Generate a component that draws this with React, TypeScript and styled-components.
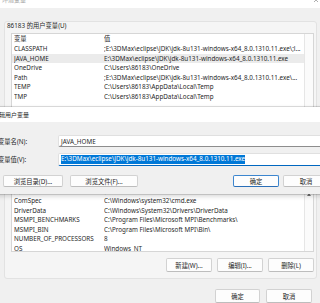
import React from "react";
import styled, { createGlobalStyle } from "styled-components";

const FONT = `"Segoe UI", "Noto Sans", "Noto Sans CJK SC", sans-serif`;

const Global = createGlobalStyle`
  *, *::before, *::after { box-sizing: border-box; }
  html, body { margin: 0; padding: 0; background: #f0f0f0; }
  body { width: 320px; height: 303px; overflow: hidden; }
`;

const Screen = styled.div`
  position: relative;
  width: 320px;
  height: 303px;
  overflow: hidden;
  background: #f0f0f0;
  font-family: ${FONT};
  font-size: 6.3px;
  color: #1f1f1f;
  display: flex;
  flex-direction: column;
`;

const TitleBar = styled.div`
  height: 8px;
  flex: none;
  background: #fff;
  display: flex;
  justify-content: space-between;
  align-items: flex-start;
  padding: 0 1px 0 2px;
  overflow: hidden;
`;

const TitleText = styled.span`
  font-size: 6px;
  line-height: 6px;
  color: #9a9a9a;
  margin-top: -3px;
  white-space: nowrap;
`;

const CloseGlyph = styled.svg`
  width: 6px;
  height: 6px;
  margin-top: -3px;
`;

const WinBody = styled.div`
  display: flex;
  flex-direction: column;
  gap: 6px;
  padding: 13px 3px 0 4px;
`;

const GroupBox = styled.section`
  border: 1px solid #e2e2e2;
  border-radius: 3px;
  background: #f5f5f5;
  padding: 0 2px 6px 6px;
  display: flex;
  flex-direction: column;
`;

const GroupLabel = styled.div`
  height: 7px;
  line-height: 7px;
  margin: 0 0 4px -4px;
  white-space: nowrap;
`;

const ListBox = styled.div<{ $h: number }>`
  height: ${(p) => p.$h}px;
  background: #fff;
  border: 1px solid #d6d6d6;
  display: flex;
  overflow: hidden;
  flex: none;
`;

const ListMain = styled.div`
  flex: 1;
  min-width: 0;
  display: flex;
  flex-direction: column;
`;

const cols = `grid-template-columns: 90px minmax(0, 1fr);`;

const HeaderRow = styled.div`
  height: 10px;
  flex: none;
  display: grid;
  ${cols}
  align-items: center;
  padding-left: 2px;
`;

const Rows = styled.div`
  flex: 1;
  overflow: hidden;
`;

const Row = styled.div<{ $sel?: boolean }>`
  height: 9.6px;
  display: grid;
  ${cols}
  align-items: center;
  padding-left: 2px;
  background: ${(p) => (p.$sel ? "#ebebeb" : "transparent")};
`;

const Cell = styled.span`
  line-height: 9.6px;
  white-space: nowrap;
  overflow: hidden;
`;

const ScrollTrack = styled.div`
  width: 9px;
  flex: none;
  border-left: 1px solid #e6e6e6;
  background: #fbfbfb;
  display: flex;
  justify-content: center;
  padding-top: 7px;
`;

const ArrowUp = styled.svg`
  width: 4px;
  height: 3px;
`;

const ButtonRow = styled.div`
  display: flex;
  justify-content: flex-end;
  gap: 5px;
  margin-top: 6px;
`;

const Button = styled.button<{ $w: number; $h?: number; $primary?: boolean }>`
  width: ${(p) => p.$w}px;
  height: ${(p) => p.$h ?? 14}px;
  flex: none;
  padding: 0;
  font-family: ${FONT};
  font-size: 6.3px;
  color: #1f1f1f;
  background: #fdfdfd;
  border: 1px solid ${(p) => (p.$primary ? "#3c86cf" : "#d2d2d2")};
  border-bottom-color: ${(p) => (p.$primary ? "#2a6fb8" : "#bdbdbd")};
  border-radius: 2px;
  white-space: nowrap;
`;

const Footer = styled.div`
  display: flex;
  justify-content: flex-end;
  gap: 6px;
  padding: 10px 8px 0 0;
`;

/* ---- edit dialog: a window lying over the parent window ---- */

const Dialog = styled.div`
  position: absolute;
  top: 107px;
  left: -12px;
  width: 350px;
  height: 87px;
  background: #f0f0f0;
  box-shadow: 0 0 0 1px rgba(0, 0, 0, 0.13), 0 2px 5px rgba(0, 0, 0, 0.18);
  display: flex;
  flex-direction: column;
`;

const DialogTitle = styled.div`
  height: 15px;
  flex: none;
  background: #fff;
  padding-left: 5px;
  line-height: 16px;
  font-size: 6px;
  white-space: nowrap;
`;

const DialogBody = styled.div`
  display: flex;
  flex-direction: column;
  padding: 13px 9px 0 10px;
`;

const FieldRow = styled.div<{ $mt?: number }>`
  display: grid;
  grid-template-columns: 60px minmax(0, 1fr);
  align-items: center;
  margin-top: ${(p) => p.$mt ?? 0}px;
`;

const FieldLabel = styled.label`
  white-space: nowrap;
`;

const TextBox = styled.div<{ $h: number; $focus?: boolean }>`
  height: ${(p) => p.$h}px;
  background: #fff;
  border: 1px solid #e0e0e0;
  border-bottom: ${(p) => (p.$focus ? "1.5px solid #0067c0" : "1px solid #8d8d8d")};
  border-radius: 2px;
  padding-left: 2px;
  display: flex;
  align-items: center;
  white-space: nowrap;
  overflow: hidden;
`;

const Selected = styled.span`
  background: #0078d7;
  color: #fff;
  line-height: 8.5px;
`;

const DialogButtons = styled.div`
  display: flex;
  align-items: center;
  margin-top: 9px;
  padding-left: 5px;
`;

const LeftButtons = styled.div`
  display: flex;
  gap: 7px;
`;

const RightButtons = styled.div`
  display: flex;
  gap: 4px;
  margin-left: auto;
`;

const JDK = "E:\\3DMax\\eclipse\\JDK\\jdk-8u131-windows-x64_8.0.1310.11.exe";

const userVars: [string, string][] = [
  ["CLASSPATH", ";" + JDK + "\\;l..."],
  ["JAVA_HOME", JDK],
  ["OneDrive", "C:\\Users\\86183\\OneDrive"],
  ["Path", ";" + JDK + "\\..."],
  ["TEMP", "C:\\Users\\86183\\AppData\\Local\\Temp"],
  ["TMP", "C:\\Users\\86183\\AppData\\Local\\Temp"],
];

const sysVars: [string, string][] = [
  ["ComSpec", "C:\\Windows\\system32\\cmd.exe"],
  ["DriverData", "C:\\Windows\\System32\\Drivers\\DriverData"],
  ["MSMPI_BENCHMARKS", "C:\\Program Files\\Microsoft MPI\\Benchmarks\\"],
  ["MSMPI_BIN", "C:\\Program Files\\Microsoft MPI\\Bin\\"],
  ["NUMBER_OF_PROCESSORS", "8"],
  ["OS", "Windows_NT"],
  ["Path", "C:\\Windows\\system32;C:\\Windows;..."],
];

function VarList({
  vars,
  height,
  selected,
  arrow,
}: {
  vars: [string, string][];
  height: number;
  selected?: string;
  arrow?: boolean;
}) {
  return (
    <ListBox $h={height}>
      <ListMain>
        <HeaderRow>
          <Cell>变量</Cell>
          <Cell>值</Cell>
        </HeaderRow>
        <Rows>
          {vars.map(([k, v]) => (
            <Row key={k} $sel={k === selected}>
              <Cell>{k}</Cell>
              <Cell>{v}</Cell>
            </Row>
          ))}
        </Rows>
      </ListMain>
      <ScrollTrack>
        {arrow && (
          <ArrowUp viewBox="0 0 4 3">
            <path d="M0 3 L2 0 L4 3 Z" fill="#6e6e6e" />
          </ArrowUp>
        )}
      </ScrollTrack>
    </ListBox>
  );
}

export default function App() {
  return (
    <Screen>
      <Global />
      <TitleBar>
        <TitleText>环境变量</TitleText>
        <CloseGlyph viewBox="0 0 6 6">
          <path d="M1 1 L5 5 M5 1 L1 5" stroke="#9a9a9a" strokeWidth="0.8" />
        </CloseGlyph>
      </TitleBar>

      <WinBody>
        <GroupBox>
          <GroupLabel>86183 的用户变量(U)</GroupLabel>
          <VarList vars={userVars} height={107} selected="JAVA_HOME" />
          <ButtonRow>
            <Button $w={46}>新建(N)...</Button>
            <Button $w={46}>编辑(E)...</Button>
            <Button $w={46}>删除(D)</Button>
          </ButtonRow>
        </GroupBox>

        <GroupBox>
          <GroupLabel>系统变量(S)</GroupLabel>
          <VarList vars={sysVars} height={67} arrow />
          <ButtonRow>
            <Button $w={46}>新建(W)...</Button>
            <Button $w={46}>编辑(I)...</Button>
            <Button $w={46}>删除(L)</Button>
          </ButtonRow>
        </GroupBox>
      </WinBody>

      <Footer>
        <Button $w={45}>确定</Button>
        <Button $w={46}>取消</Button>
      </Footer>

      <Dialog>
        <DialogTitle>编辑用户变量</DialogTitle>
        <DialogBody>
          <FieldRow>
            <FieldLabel>变量名(N):</FieldLabel>
            <TextBox $h={12}>JAVA_HOME</TextBox>
          </FieldRow>
          <FieldRow $mt={6}>
            <FieldLabel>变量值(V):</FieldLabel>
            <TextBox $h={13} $focus>
              <Selected>{JDK}</Selected>
            </TextBox>
          </FieldRow>
          <DialogButtons>
            <LeftButtons>
              <Button $w={60} $h={12}>浏览目录(D)...</Button>
              <Button $w={68} $h={12}>浏览文件(F)...</Button>
            </LeftButtons>
            <RightButtons>
              <Button $w={46} $h={12} $primary>确定</Button>
              <Button $w={46} $h={12}>取消</Button>
            </RightButtons>
          </DialogButtons>
        </DialogBody>
      </Dialog>
    </Screen>
  );
}
